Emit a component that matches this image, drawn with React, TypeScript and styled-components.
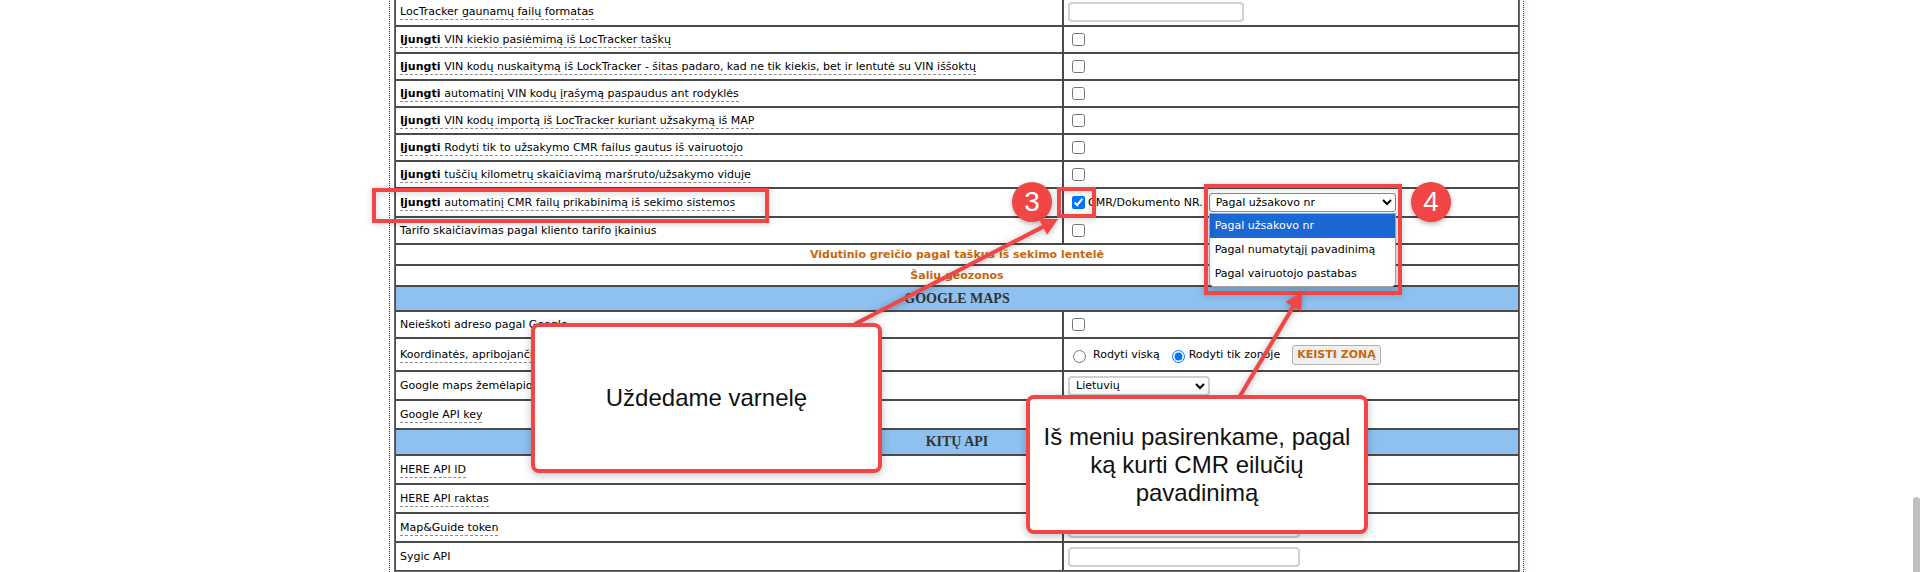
import React from 'react';
import styled, { createGlobalStyle } from 'styled-components';

type SettingRow =
  | { kind: 'field'; h: number; on?: boolean; text: string; dashed?: boolean; value?: React.ReactNode }
  | { kind: 'section'; h: number; text: string }
  | { kind: 'header'; h: number; text: string };

const RED = '#f24545';
const ORANGE = '#c8680c';

const GlobalStyle = createGlobalStyle`
  html, body {
    margin: 0;
    padding: 0;
    background: #fff;
    overflow: hidden;
  }
  body {
    font-family: "DejaVu Sans", Verdana, sans-serif;
    font-size: 11px;
    color: #000;
  }
`;

const Page = styled.div`
  position: relative;
  width: 1920px;
  height: 572px;
  overflow: hidden;
`;

const Panel = styled.div`
  width: fit-content;
  margin: -4px 0 0 389px;
  padding: 0 3px 0 4px;
  border-left: 1px dotted #333;
  border-right: 1px dotted #333;
  box-shadow: 4px 0 5px -3px rgba(0, 0, 0, 0.15);
`;

const SettingsTable = styled.table`
  width: 1126px;
  table-layout: fixed;
  border-collapse: separate;
  border-spacing: 0;
  border: 1px solid #6a6a6a;
`;

const Row = styled.tr<{ $h: number }>`
  height: ${({ $h }) => $h}px;
`;

const Cell = styled.td`
  border: 1px solid #4a4a4a;
  padding: 0 4px;
  white-space: nowrap;
  vertical-align: middle;
  background: #fff;
`;

const LabelCell = styled(Cell)`
  width: 658px;
`;

const ValueCell = styled(Cell)``;

const SectionCell = styled(Cell)`
  text-align: center;
  font-weight: bold;
  color: ${ORANGE};
`;

const HeaderCell = styled(Cell)`
  text-align: center;
  background: #8ec1ef;
  font-family: "Liberation Serif", "Times New Roman", serif;
  font-size: 14px;
  font-weight: bold;
  color: #333;
`;

const Hint = styled.span<{ $dashed?: boolean }>`
  padding-bottom: 1px;
  border-bottom: ${({ $dashed }) => ($dashed ? '1px dashed #8a8a8a' : 'none')};
`;

const TextField = styled.input<{ $w: number }>`
  box-sizing: border-box;
  width: ${({ $w }) => $w}px;
  height: 20px;
  margin: 0;
  border: 2px solid #d0d0d0;
  border-radius: 4px;
  vertical-align: middle;
`;

const Check = styled.input`
  width: 13px;
  height: 13px;
  margin: 3px 3px 3px 4px;
  vertical-align: middle;
`;

const Radio = styled.input`
  width: 13px;
  height: 13px;
  margin: 3px 7px 0 5px;
  vertical-align: middle;
`;

const RadioText = styled.span`
  margin-right: 12px;
  vertical-align: middle;
`;

const ZoneButton = styled.button`
  height: 20px;
  margin-left: 0;
  padding: 0 4px;
  font-family: "DejaVu Sans", Verdana, sans-serif;
  font-size: 11px;
  font-weight: bold;
  color: ${ORANGE};
  background: #efefef;
  border: 1px solid #b0b0b0;
  border-radius: 3px;
  vertical-align: middle;
`;

const InlineText = styled.span`
  vertical-align: middle;
`;

const SelectWrap = styled.span`
  position: relative;
  display: inline-block;
  margin-left: 6px;
  vertical-align: middle;
`;

const Select = styled.select<{ $w: number }>`
  box-sizing: border-box;
  width: ${({ $w }) => $w}px;
  height: 19px;
  margin: 0;
  padding: 0 2px;
  font-family: "DejaVu Sans", Verdana, sans-serif;
  font-size: 11px;
  color: #000;
  background: #fff;
  border: 1px solid #8a8a8a;
  border-radius: 3px;
  vertical-align: middle;
`;

const LangSelect = styled(Select)`
  height: 20px;
  border: 2px solid #d0d0d0;
  border-radius: 4px;
`;

const OptionList = styled.ul`
  position: absolute;
  top: 100%;
  left: 0;
  z-index: 5;
  box-sizing: border-box;
  width: 100%;
  margin: 1px 0 0;
  padding: 0;
  list-style: none;
  background: #fff;
  border: 1px solid #a8a8a8;
  border-radius: 0 0 5px 5px;
  box-shadow: 0 3px 6px rgba(0, 0, 0, 0.25);
  overflow: hidden;
`;

const OptionItem = styled.li<{ $active?: boolean }>`
  height: 24px;
  padding: 0 5px;
  line-height: 24px;
  font-size: 11px;
  color: ${({ $active }) => ($active ? '#fff' : '#000')};
  background: ${({ $active }) => ($active ? '#1b67d3' : '#fff')};
`;

/* annotation layer drawn over the settings table */
const Overlay = styled.div`
  position: absolute;
  inset: 0;
  z-index: 10;
  pointer-events: none;
`;

const Frame = styled.div<{ $x: number; $y: number; $w: number; $h: number }>`
  position: absolute;
  left: ${({ $x }) => $x}px;
  top: ${({ $y }) => $y}px;
  width: ${({ $w }) => $w}px;
  height: ${({ $h }) => $h}px;
  box-sizing: border-box;
  border: 4px solid ${RED};
  filter: drop-shadow(0 1px 3px rgba(0, 0, 0, 0.2));
`;

const Badge = styled.div<{ $x: number; $y: number }>`
  position: absolute;
  left: ${({ $x }) => $x - 20}px;
  top: ${({ $y }) => $y - 20}px;
  width: 40px;
  height: 40px;
  display: flex;
  align-items: center;
  justify-content: center;
  border-radius: 50%;
  background: ${RED};
  color: #fff;
  font-family: "Liberation Sans", Arial, sans-serif;
  font-size: 28px;
  box-shadow: 0 2px 5px rgba(0, 0, 0, 0.3);
`;

const Callout = styled.div<{ $x: number; $y: number; $w: number; $h: number }>`
  position: absolute;
  left: ${({ $x }) => $x}px;
  top: ${({ $y }) => $y}px;
  width: ${({ $w }) => $w}px;
  height: ${({ $h }) => $h}px;
  box-sizing: border-box;
  display: flex;
  align-items: center;
  justify-content: center;
  text-align: center;
  background: #fff;
  border: 4px solid ${RED};
  border-radius: 8px;
  font-family: "Liberation Sans", Arial, sans-serif;
  font-size: 24px;
  line-height: 28px;
  color: #111;
  box-shadow: 0 2px 8px rgba(0, 0, 0, 0.25);
`;

const Arrows = styled.svg`
  position: absolute;
  left: 0;
  top: 0;
  filter: drop-shadow(0 1px 3px rgba(0, 0, 0, 0.3));
`;

const ScrollThumb = styled.div`
  position: absolute;
  right: 0;
  top: 497px;
  bottom: 0;
  width: 7px;
  background: #c1c1c1;
  border-radius: 4px 4px 0 0;
`;

const Arrow = ({ from, to }: { from: [number, number]; to: [number, number] }) => {
  const dx = to[0] - from[0];
  const dy = to[1] - from[1];
  const len = Math.hypot(dx, dy);
  const ux = dx / len;
  const uy = dy / len;
  const bx = to[0] - ux * 17;
  const by = to[1] - uy * 17;
  const head = [
    [to[0], to[1]],
    [bx - uy * 9, by + ux * 9],
    [bx + uy * 9, by - ux * 9],
  ]
    .map((p) => p.join(','))
    .join(' ');

  return (
    <g>
      <line x1={from[0]} y1={from[1]} x2={bx + ux * 2} y2={by + uy * 2} stroke={RED} strokeWidth={4} />
      <polygon points={head} fill={RED} />
    </g>
  );
};

const docOptions = ['Pagal užsakovo nr', 'Pagal numatytąjį pavadinimą', 'Pagal vairuotojo pastabas'];

const rows: SettingRow[] = [
  { kind: 'field', h: 29, text: 'LocTracker gaunamų failų formatas', dashed: true, value: <TextField $w={176} /> },
  { kind: 'field', h: 27, on: true, text: 'VIN kiekio pasiėmimą iš LocTracker taškų', dashed: true, value: <Check type="checkbox" /> },
  {
    kind: 'field',
    h: 27,
    on: true,
    text: 'VIN kodų nuskaitymą iš LockTracker - šitas padaro, kad ne tik kiekis, bet ir lentutė su VIN iššoktų',
    dashed: true,
    value: <Check type="checkbox" />,
  },
  { kind: 'field', h: 27, on: true, text: 'automatinį VIN kodų įrašymą paspaudus ant rodyklės', dashed: true, value: <Check type="checkbox" /> },
  { kind: 'field', h: 27, on: true, text: 'VIN kodų importą iš LocTracker kuriant užsakymą iš MAP', dashed: true, value: <Check type="checkbox" /> },
  { kind: 'field', h: 27, on: true, text: 'Rodyti tik to užsakymo CMR failus gautus iš vairuotojo', dashed: true, value: <Check type="checkbox" /> },
  { kind: 'field', h: 27, on: true, text: 'tuščių kilometrų skaičiavimą maršruto/užsakymo viduje', dashed: true, value: <Check type="checkbox" /> },
  {
    kind: 'field',
    h: 29,
    on: true,
    text: 'automatinį CMR failų prikabinimą iš sekimo sistemos',
    dashed: true,
    value: (
      <>
        <Check type="checkbox" defaultChecked />
        <InlineText>CMR/Dokumento NR.</InlineText>
        <SelectWrap>
          <Select $w={187} defaultValue={docOptions[0]}>
            {docOptions.map((o) => (
              <option key={o}>{o}</option>
            ))}
          </Select>
          <OptionList>
            {docOptions.map((o, idx) => (
              <OptionItem key={o} $active={idx === 0}>
                {o}
              </OptionItem>
            ))}
          </OptionList>
        </SelectWrap>
      </>
    ),
  },
  { kind: 'field', h: 27, text: 'Tarifo skaičiavimas pagal kliento tarifo įkainius', value: <Check type="checkbox" /> },
  { kind: 'section', h: 21, text: 'Vidutinio greičio pagal taškus iš sekimo lentelė' },
  { kind: 'section', h: 21, text: 'Šalių geozonos' },
  { kind: 'header', h: 25, text: 'GOOGLE MAPS' },
  { kind: 'field', h: 27, text: 'Neieškoti adreso pagal Google', value: <Check type="checkbox" /> },
  {
    kind: 'field',
    h: 33,
    text: 'Koordinatės, apribojančios paieškos zoną',
    dashed: true,
    value: (
      <>
        <Radio type="radio" name="zone" />
        <RadioText>Rodyti viską</RadioText>
        <Radio type="radio" name="zone" defaultChecked style={{ marginLeft: 0, marginRight: 4 }} />
        <RadioText>Rodyti tik zonoje</RadioText>
        <ZoneButton>KEISTI ZONĄ</ZoneButton>
      </>
    ),
  },
  {
    kind: 'field',
    h: 29,
    text: 'Google maps žemėlapio kalba',
    value: (
      <LangSelect $w={142} defaultValue="lt">
        <option value="lt">Lietuvių</option>
        <option value="en">English</option>
      </LangSelect>
    ),
  },
  { kind: 'field', h: 29, text: 'Google API key', dashed: true, value: <TextField $w={232} /> },
  { kind: 'header', h: 26, text: 'KITŲ API' },
  { kind: 'field', h: 29, text: 'HERE API ID', dashed: true, value: <TextField $w={232} /> },
  { kind: 'field', h: 29, text: 'HERE API raktas', dashed: true, value: <TextField $w={232} /> },
  { kind: 'field', h: 29, text: 'Map&Guide token', dashed: true, value: <TextField $w={232} /> },
  { kind: 'field', h: 29, text: 'Sygic API', value: <TextField $w={232} /> },
];

const App = () => {
  return (
    <Page>
      <GlobalStyle />
      <Panel>
        <SettingsTable>
          <tbody>
            {rows.map((r, idx) => {
              if (r.kind === 'section') {
                return (
                  <Row key={idx} $h={r.h}>
                    <SectionCell colSpan={2}>{r.text}</SectionCell>
                  </Row>
                );
              }
              if (r.kind === 'header') {
                return (
                  <Row key={idx} $h={r.h}>
                    <HeaderCell colSpan={2}>{r.text}</HeaderCell>
                  </Row>
                );
              }
              return (
                <Row key={idx} $h={r.h}>
                  <LabelCell>
                    <Hint $dashed={r.dashed}>
                      {r.on && <b>Įjungti </b>}
                      {r.text}
                    </Hint>
                  </LabelCell>
                  <ValueCell>{r.value}</ValueCell>
                </Row>
              );
            })}
          </tbody>
        </SettingsTable>
      </Panel>

      <Overlay>
        <Frame $x={372} $y={188} $w={397} $h={35} />
        <Frame $x={1057} $y={187} $w={39} $h={31} />
        <Frame $x={1204} $y={184} $w={198} $h={111} />
        <Badge $x={1032} $y={202}>3</Badge>
        <Badge $x={1431} $y={202}>4</Badge>
        <Arrows width={1920} height={572}>
          <Arrow from={[855, 324]} to={[1058, 219]} />
          <Arrow from={[1240, 396]} to={[1302, 292]} />
        </Arrows>
        <Callout $x={531} $y={323} $w={351} $h={150}>
          Uždedame varnelę
        </Callout>
        <Callout $x={1026} $y={395} $w={342} $h={139}>
          Iš meniu pasirenkame, pagal
          <br />
          ką kurti CMR eilučių
          <br />
          pavadinimą
        </Callout>
      </Overlay>
      <ScrollThumb />
    </Page>
  );
};

export default App;
